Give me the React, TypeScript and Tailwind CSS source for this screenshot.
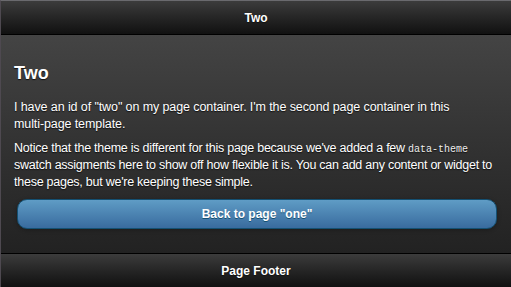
import React from 'react';

export default function App() {
  const shadow = { textShadow: '0 1px 1px #111' };
  return (
    <div className="flex h-[287px] w-[511px] flex-col overflow-hidden border-l border-t border-l-[#4e4950] border-t-[#6a6a6e] font-['Liberation_Sans',Arial,sans-serif] text-white">
      {/* header */}
      <div className="flex h-[34px] shrink-0 items-center justify-center border-b border-black bg-gradient-to-b from-[#3c3c3c] to-[#111]">
        <h1 className="text-[12px] font-bold" style={shadow}>Two</h1>
      </div>

      {/* content */}
      <div className="flex-1 bg-gradient-to-b from-[#444] to-[#222] pl-[13px] pr-[10px] pt-[27px]">
        <h2 className="text-[18px] font-bold leading-[22px]" style={shadow}>Two</h2>
        <p className="mt-[15px] text-[12.5px] leading-[17px] tracking-[-0.1px]" style={shadow}>
          I have an id of "two" on my page container. I'm the second page container in this{' '}
          <span className="whitespace-nowrap">multi-page</span> template.
        </p>
        <p className="mt-[7px] text-[12.5px] leading-[17px] tracking-[-0.25px]" style={shadow}>
          Notice that the theme is different for this page because we've added a few{' '}
          <code className="whitespace-nowrap font-['Liberation_Mono',monospace] text-[10px] font-normal leading-none tracking-normal text-[#eee]">data-theme</code>
          <br />
          swatch assigments here to show off how flexible it is. You can add any content or widget to
          <br />
          these pages, but we're keeping these simple.
        </p>
        <div className="pl-[3px] pr-[4px] pt-[8px]">
          <a className="flex h-[30px] w-full items-center justify-center rounded-[10px] border border-[#145072] bg-gradient-to-b from-[#5f9cc5] to-[#396b9e] text-[12px] font-bold shadow-[0_1px_4px_rgba(0,0,0,0.3)]" style={{ textShadow: '0 1px 0 #145072' }}>
            Back to page "one"
          </a>
        </div>
      </div>

      {/* footer */}
      <div className="flex h-[34px] shrink-0 items-center justify-center border-t border-black bg-gradient-to-b from-[#3c3c3c] to-[#111]">
        <h4 className="text-[12px] font-bold" style={shadow}>Page Footer</h4>
      </div>
    </div>
  );
}
